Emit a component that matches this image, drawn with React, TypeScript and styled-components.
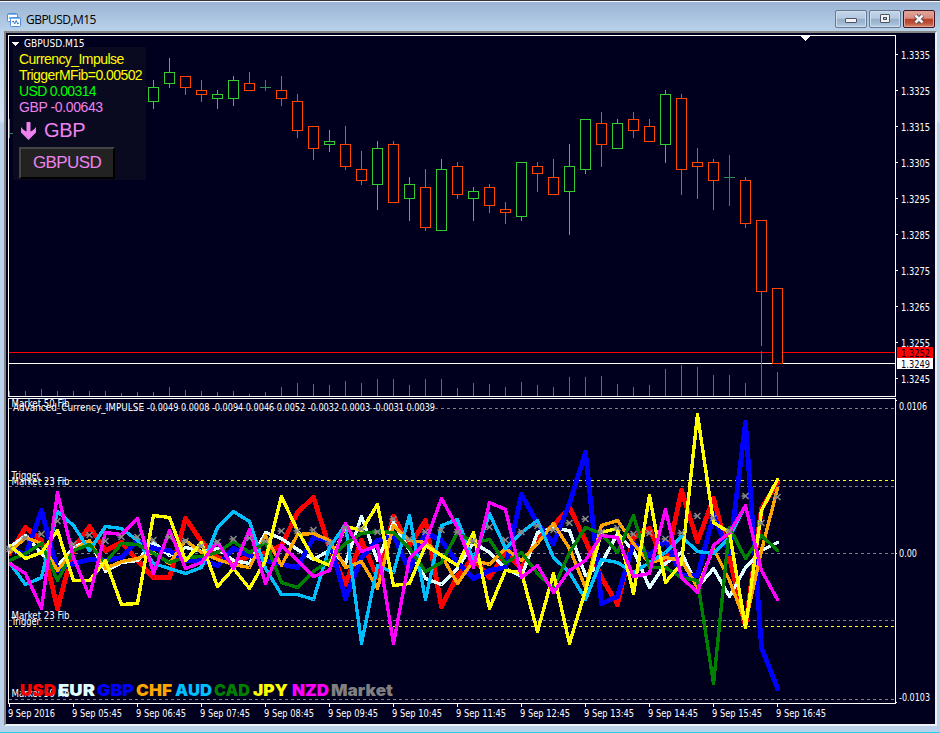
import React from "react";
import styled, { createGlobalStyle } from "styled-components";

const GlobalStyle = createGlobalStyle`
  * { box-sizing: border-box; }
  body { margin: 0; overflow: hidden; background: #b9d1ea; }
`;

const uiFont = `"DejaVu Sans Condensed", "DejaVu Sans", sans-serif`;

const Window = styled.div`
  display: flex;
  flex-direction: column;
  width: 940px;
  height: 733px;
  border-top: 1px solid #35323c;
  border-bottom: 1px solid #26cfe6;
  background: linear-gradient(#9ab4d3 0, #b9d1ea 30px, #d3e3f4 119px, #b9d1ea 123px);
`;

const TitleBar = styled.header`
  display: flex;
  align-items: center;
  flex: none;
  height: 30px;
  padding: 6px 5px 0 7px;
  border-top: 1px solid #f4f8fc;
  background: linear-gradient(#9ab4d3, #b9d1ea);
`;

const Title = styled.h1`
  flex: 1;
  margin: 0 0 0 5px;
  font: 400 12px/16px "Open Sans", sans-serif;
  letter-spacing: -0.55px;
  color: #000;
`;

const Controls = styled.div`
  display: flex;
  gap: 2px;
  margin-top: -1px;
`;

const ControlButton = styled.button<{ $danger?: boolean }>`
  display: grid;
  place-items: center;
  width: 32px;
  height: 18px;
  padding: 0;
  border: 1px solid ${(p) => (p.$danger ? "#431422" : "#64788f")};
  border-radius: 2px;
  box-shadow: inset 0 0 0 1px ${(p) => (p.$danger ? "#e0a296" : "#cfdeed")};
  background: ${(p) =>
    p.$danger
      ? "linear-gradient(#e4a79b, #d58a7b 46%, #b83c25 50%, #bd5138 75%, #d58a6c)"
      : "linear-gradient(#c3d6e9, #b3c9e0 46%, #94aeca 50%, #a0b9d3 75%, #b8d0e8)"};
`;

const Frame = styled.main`
  position: relative;
  width: 933px;
  height: 695px;
  margin-left: 4px;
  border: 2px solid;
  border-color: #858585 #eef1f5 #eef1f5 #858585;
  background: #00001e;
`;

const Canvas = styled.svg`
  display: block;
  width: 929px;
  height: 691px;
`;

const AxisText = styled.text`
  font-family: ${uiFont};
  font-size: 10px;
`;

const LegendText = styled.text`
  font-family: Inter, sans-serif;
  font-size: 16.5px;
  font-weight: 900;
`;

const SignalPanel = styled.section`
  position: absolute;
  left: 7px;
  top: 14px;
  width: 133px;
  height: 133px;
  padding: 4px 6px 0;
  background: #09091f;
  font-family: "Liberation Sans", sans-serif;
`;

const SignalLine = styled.div<{ $color: string; $spacing: number }>`
  height: 16px;
  font-size: 14px;
  line-height: 16px;
  letter-spacing: ${(p) => p.$spacing}px;
  white-space: nowrap;
  color: ${(p) => p.$color};
`;

const Direction = styled.div`
  display: flex;
  align-items: center;
  gap: 8px;
  height: 31px;
  padding-left: 2px;
  font-size: 20px;
  letter-spacing: -0.3px;
  color: #ee82ee;
`;

const PairButton = styled.button`
  width: 96px;
  height: 32px;
  margin-top: 1px;
  padding: 0;
  border: 2px solid;
  border-color: #444 #000 #000 #444;
  background: #222;
  font: 17px "Liberation Sans", sans-serif;
  letter-spacing: -0.6px;
  color: #ee82ee;
`;

const barX = (i: number) => 9 + i * 16;

type Kind = "up" | "down" | "flat";
// high, body top, body bottom, low; the first bar is at index 9
const candles: [Kind, number, number, number, number][] = [
  ["up", 80, 87, 101, 109], ["up", 58, 72, 83, 88], ["down", 76, 76, 87, 95], ["down", 80, 90, 94, 102],
  ["up", 90, 94, 98, 109], ["up", 76, 80, 98, 106], ["down", 72, 83, 90, 91], ["flat", 80, 87, 87, 91],
  ["down", 76, 90, 98, 106], ["down", 94, 101, 130, 138], ["down", 126, 126, 148, 160], ["up", 130, 141, 144, 152],
  ["down", 126, 144, 166, 170], ["down", 151, 169, 180, 185], ["up", 141, 148, 184, 210], ["down", 141, 144, 202, 203],
  ["up", 177, 184, 198, 221], ["down", 169, 187, 227, 231], ["up", 159, 169, 230, 231], ["down", 162, 166, 194, 199],
  ["up", 187, 191, 198, 221], ["down", 184, 187, 205, 213], ["down", 202, 209, 212, 224], ["up", 162, 162, 216, 221],
  ["down", 162, 166, 173, 192], ["down", 159, 177, 194, 195], ["up", 144, 166, 191, 235], ["up", 119, 119, 169, 174],
  ["down", 112, 123, 144, 167], ["up", 119, 123, 148, 149], ["down", 112, 119, 130, 138], ["down", 119, 126, 141, 142],
  ["up", 90, 94, 144, 163], ["down", 94, 98, 169, 195], ["down", 148, 162, 166, 199], ["down", 159, 162, 180, 210],
  ["flat", 155, 177, 177, 206], ["down", 177, 180, 223, 228], ["down", 220, 220, 291, 346], ["down", 288, 288, 363, 364],
];

const candleColor: Record<Kind, string> = { up: "#32cd32", down: "#ff4500", flat: "#2e8b57" };

const volumeTops = [
  391, 391, 389, 391, 391, 391, 391, 393, 392, 392, 387, 390, 391, 392, 391, 394, 392, 387, 383, 384, 385, 381, 383,
  379, 379, 385, 379, 379, 388, 383, 384, 387, 382, 385, 387, 377, 377, 376, 384, 387, 385, 369, 365, 367, 375, 375,
  383, 351, 372,
];

const series = [
  { name: "USD", color: "#ff0000", width: 4.8, x: 20, w: 36, y: [553,527,540,608,548,526,550,542,560,577,577,518,541,557,563,555,553,545,512,497,547,584,540,577,516,545,520,606,575,558,577,552,568,537,525,507,540,577,604,537,528,565,490,541,498,557,626,508,482] },
  { name: "EUR", color: "#e0ffff", width: 3.4, x: 58, w: 37, y: [547,535,553,566,547,540,571,562,560,542,555,547,551,548,560,563,532,538,549,559,550,563,516,560,522,550,578,584,568,542,552,568,576,532,528,530,575,563,533,550,587,563,552,587,568,596,567,550,542] },
  { name: "GBP", color: "#0000ff", width: 4.8, x: 97, w: 37, y: [547,555,510,570,563,559,560,557,540,548,550,560,560,565,548,555,560,564,567,537,540,598,557,540,535,570,532,540,562,578,570,567,494,523,543,503,452,603,596,543,555,540,575,575,515,553,422,647,688] },
  { name: "CHF", color: "#ffa500", width: 3.4, x: 136, w: 36, y: [552,537,543,570,550,540,568,561,558,552,563,540,552,559,564,567,535,565,534,533,540,567,561,588,525,540,542,555,583,560,564,548,560,543,523,548,587,525,520,543,563,557,560,587,548,580,622,550,488] },
  { name: "AUD", color: "#00bfff", width: 3.4, x: 175, w: 37, y: [562,584,577,511,525,550,526,528,540,563,568,573,567,527,511,521,568,594,594,599,547,524,643,565,572,515,599,525,519,560,513,548,532,520,557,572,599,559,562,572,562,552,536,551,553,537,505,570,599] },
  { name: "CAD", color: "#008000", width: 3.4, x: 214, w: 36, y: [560,553,543,580,550,544,562,543,544,553,562,557,556,552,541,552,542,582,587,571,560,543,533,531,532,548,571,562,532,542,539,563,552,573,588,552,527,533,552,515,567,567,577,580,683,527,558,535,550] },
  { name: "JPY", color: "#ffff00", width: 3.4, x: 253, w: 35, y: [545,558,552,530,580,580,560,604,603,515,517,560,542,586,568,588,560,496,530,558,565,526,530,504,585,583,545,555,565,532,608,570,572,631,573,643,590,532,528,593,495,582,563,414,522,532,627,510,479] },
  { name: "NZD", color: "#ff00ff", width: 3.4, x: 292, w: 37, y: [563,573,608,492,557,596,532,534,518,573,530,568,562,541,568,529,583,545,560,576,570,523,551,545,643,558,542,498,527,567,502,509,577,565,592,570,560,535,537,576,573,509,577,592,545,532,505,570,599] },
];

const marketMarks = [
  549,538,534,521,544,535,541,537,537,540,537,541,546,542,539,538,541,531,531,530,543,528,529,532,519,539,532,530,532,
  541,527,540,532,526,530,523,519,532,528,534,533,539,533,516,518,531,496,523,497,
];

const levels: [number, string][] = [
  [408, "#808080"], [480, "#ffff00"], [486, "#808080"], [553, "#808080"], [620, "#808080"], [626, "#ffff00"], [699, "#808080"],
];

const levelLabels: [string, number, number][] = [
  ["Market 50 Fib", 407, 58], ["Trigger", 479, 28.5], ["Market 23 Fib", 485, 58],
  ["Market 23 Fib", 619, 58], ["Trigger", 625, 28.5], ["Market 50 Fib", 697, 58],
];

const prices = ["1.3335", "1.3325", "1.3315", "1.3305", "1.3295", "1.3285", "1.3275", "1.3265", "1.3255", "1.3245"];
const times = [
  "9 Sep 2016", "9 Sep 05:45", "9 Sep 06:45", "9 Sep 07:45", "9 Sep 08:45", "9 Sep 09:45", "9 Sep 10:45",
  "9 Sep 11:45", "9 Sep 12:45", "9 Sep 13:45", "9 Sep 14:45", "9 Sep 15:45", "9 Sep 16:45",
];

type LabelProps = { x: number; y: number; w: number; color?: string; children: string };
const Label = ({ x, y, w, color = "#fff", children }: LabelProps) => (
  <AxisText x={x} y={y} textLength={w} lengthAdjust="spacingAndGlyphs" fill={color}>
    {children}
  </AxisText>
);

const PriceChart = () => (
  <g>
    <g shapeRendering="crispEdges">
      <path d="M8.5 396V35.5H895.5V396" fill="none" stroke="#fff" />
      <path d="M9 119h1v14h3v1H10v4H9z" fill="#2e8b57" />
      {volumeTops.map((y, i) => (
        <rect key={i} x={barX(i)} y={y} width="1" height={396 - y} fill="#2e8b57" />
      ))}
      <rect x="9" y="352" width="886" height="1" fill="#f00" />
      <rect x="9" y="363" width="886" height="1" fill="#fff" />
      <rect x="761" y="351" width="1" height="45" fill="#2e8b57" />
      {candles.map(([kind, high, top, bottom, low], i) => {
        const x = barX(i + 9);
        const color = candleColor[kind];
        return (
          <g key={i}>
            <rect x={x} y={high} width="1" height={low - high} fill={color} />
            {kind === "flat" ? (
              <rect x={x - 5} y={top} width="11" height="1" fill={color} />
            ) : (
              <rect x={x - 4.5} y={top + 0.5} width="10" height={bottom - top} fill="#00001e" stroke={color} />
            )}
          </g>
        );
      })}
      <rect x="8" y="396" width="888" height="1" fill="#fff" />
      <path d="M800 36h11l-5.5 5z" fill="#fff" />
      <path d="M11 42h9l-4.5 4z" fill="#fff" />
      {prices.map((p, i) => (
        <rect key={p} x="896" y={54 + i * 36} width="2" height="1" fill="#fff" />
      ))}
      <rect x="897" y="347" width="36" height="11" fill="#f00" />
      <rect x="897" y="358" width="36" height="11" fill="#fff" />
    </g>
    <Label x={24} y={47} w={60.5}>GBPUSD,M15</Label>
    {prices.map((p, i) => (
      <Label key={p} x={901} y={58.6 + i * 36} w={29}>{p}</Label>
    ))}
    <Label x={901} y={356.6} w={29} color="#00001e">1.3252</Label>
    <Label x={901} y={367.6} w={29} color="#00001e">1.3249</Label>
  </g>
);

const ImpulseChart = () => (
  <g>
    <g shapeRendering="crispEdges">
      {levels.map(([y, color]) => (
        <path key={y} d={`M9 ${y + 0.5}H895`} stroke={color} strokeDasharray="3 3" />
      ))}
      <path d="M8.5 704V398.5H895.5V703.5H8.5" fill="none" stroke="#fff" />
      <path d="M896 400.5h1M896 553.5h1M896 702.5h1" stroke="#fff" />
      {times.map((t, i) => (
        <rect key={t} x={9 + i * 64} y="704" width="1" height="3" fill="#fff" />
      ))}
    </g>
    {levelLabels.map(([text, y, w]) => (
      <Label key={y} x={11.5} y={y} w={w}>{text}</Label>
    ))}
    <Label x={13} y={411.4} w={131}>Advanced_Currency_IMPULSE</Label>
    <Label x={147} y={411.4} w={288}>
      -0.0049 0.0008 -0.0094 0.0046 0.0052 -0.0032 0.0003 -0.0031 0.0039
    </Label>
    <svg x="9" y="399" width="886" height="304" viewBox="9 399 886 304" shapeRendering="crispEdges">
      {series.map((s) => (
        <polyline
          key={s.name}
          points={s.y.map((y, i) => `${barX(i) + 0.5},${y + 0.5}`).join(" ")}
          fill="none"
          stroke={s.color}
          strokeWidth={s.width}
          strokeLinejoin="round"
          strokeLinecap="round"
        />
      ))}
    </svg>
    {marketMarks.map((y, i) => (
      <path
        key={i}
        d={`M${barX(i) - 2.5} ${y - 3}l6 6m0 -6l-6 6M${barX(i) - 3.5} ${y}h3`}
        stroke="#8a8a8a"
        strokeWidth="1.5"
      />
    ))}
    {series.map((s) => (
      <LegendText key={s.name} x={s.x} y={696} textLength={s.w} lengthAdjust="spacingAndGlyphs" fill={s.color}>
        {s.name}
      </LegendText>
    ))}
    <LegendText x={331} y={696} textLength={62} lengthAdjust="spacingAndGlyphs" fill="#808080">
      Market
    </LegendText>
    <Label x={899} y={409.6} w={28}>0.0106</Label>
    <Label x={899} y={557.4} w={18}>0.00</Label>
    <Label x={899} y={700.6} w={31}>-0.0103</Label>
    {times.map((t, i) => (
      <Label key={t} x={8 + i * 64} y={716.5} w={i === 0 ? 47 : 50}>{t}</Label>
    ))}
  </g>
);

const AppIcon = () => (
  <svg width="14" height="14" viewBox="0 0 14 14">
    <rect x="0.5" y="0.5" width="10" height="8" rx="1" fill="#fff" stroke="#4d8fdc" />
    <path d="M1 1.5h9" stroke="#7db2ee" />
    <path d="M2 6l1-2 1 2 1-2" fill="none" stroke="#4d8fdc" strokeWidth="0.8" />
    <rect x="3.5" y="4.5" width="10" height="9" rx="1" fill="#fff" stroke="#4d8fdc" />
    <path d="M4 5.5h9" stroke="#7db2ee" />
    <path d="M5 9l1.200-1 1.500 3 1.500-3.500 1.500 3.500 1.300-1" fill="none" stroke="#3b78c4" />
  </svg>
);

export default function App() {
  return (
    <>
      <GlobalStyle />
      <Window>
        <TitleBar>
          <AppIcon />
          <Title>GBPUSD,M15</Title>
          <Controls>
            <ControlButton aria-label="Minimize">
              <svg width="12" height="10" viewBox="0 0 12 10">
                <rect x="0.500" y="4.500" width="11" height="4" rx="0.500" fill="#f3f3f3" stroke="#4c5365" />
              </svg>
            </ControlButton>
            <ControlButton aria-label="Restore">
              <svg width="12" height="10" viewBox="0 0 12 10">
                <rect x="1.500" y="0.500" width="9" height="8" rx="0.500" fill="#f3f3f3" stroke="#4c5365" />
                <rect x="4.500" y="3.500" width="3" height="2" fill="#a7bdd5" stroke="#4c5365" />
              </svg>
            </ControlButton>
            <ControlButton aria-label="Close" $danger>
              <svg width="12" height="10" viewBox="0 0 12 10">
                <path d="M2.500 1.500l7 7m0-7l-7 7" stroke="#4c4353" strokeWidth="4.400" />
                <path d="M2.500 1.500l7 7m0-7l-7 7" stroke="#f6f3f3" strokeWidth="2.500" />
              </svg>
            </ControlButton>
          </Controls>
        </TitleBar>
        <Frame>
          <Canvas viewBox="6 33 929 691">
            <PriceChart />
            <ImpulseChart />
          </Canvas>
          <SignalPanel>
            <SignalLine $color="#ffff00" $spacing={-0.56}>Currency_Impulse</SignalLine>
            <SignalLine $color="#ffff00" $spacing={-0.56}>TriggerMFib=0.00502</SignalLine>
            <SignalLine $color="#00ff00" $spacing={-0.65}>USD 0.00314</SignalLine>
            <SignalLine $color="#ee82ee" $spacing={-0.4}>GBP -0.00643</SignalLine>
            <Direction>
              <svg width="15" height="18" viewBox="0 0 15 18">
                <path
                  d="M5.500 0h4v9.500C11.500 9 13.500 7 15 5v5.500L7.500 18L0 10.500V5C1.500 7 3.500 9 5.500 9.500z"
                  fill="#ee82ee"
                />
              </svg>
              GBP
            </Direction>
            <PairButton>GBPUSD</PairButton>
          </SignalPanel>
        </Frame>
      </Window>
    </>
  );
}
